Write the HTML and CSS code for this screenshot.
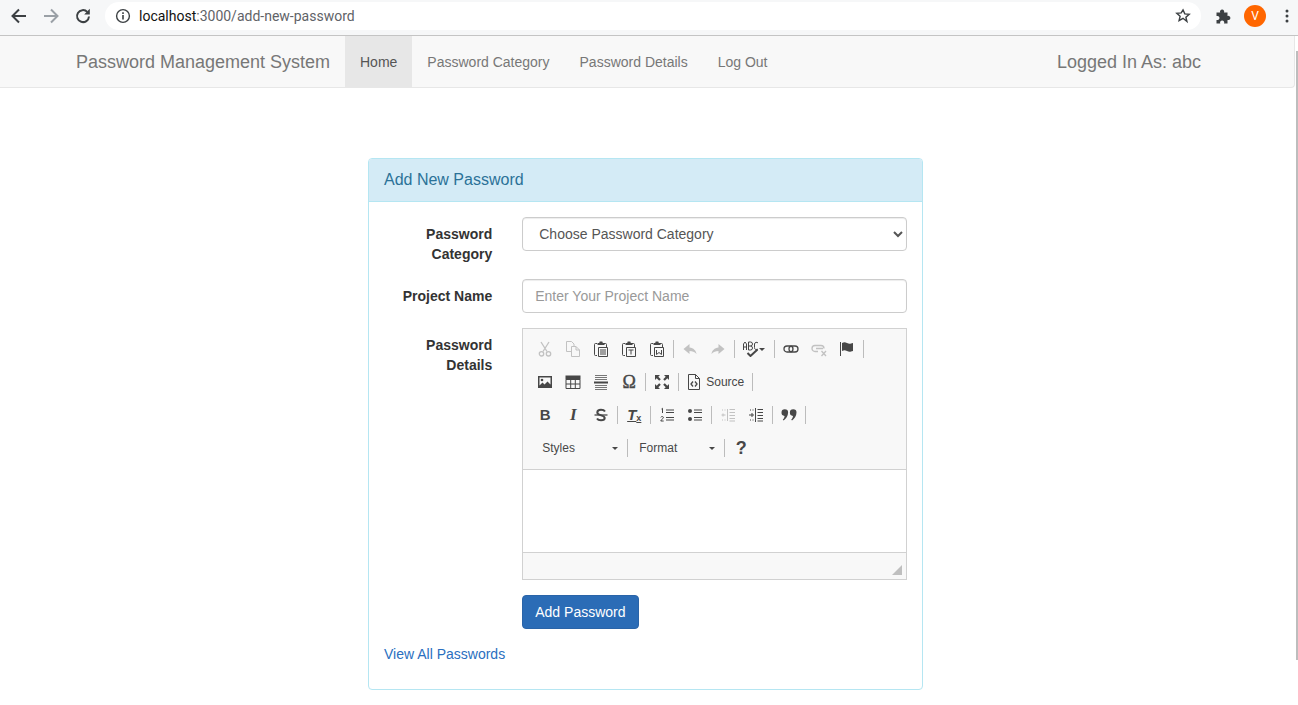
FILE: index.html
```html
<!DOCTYPE html>
<html lang="en">
<head>
<meta charset="utf-8">
<title>Add New Password</title>
<link rel="stylesheet" href="styles.css">
</head>
<body>
<header class="browser">
  <svg class="b-ico" viewBox="0 0 20 20"><path d="M17 10H4M10 3.500 3.500 10l6.500 6.500" class="b-line"/></svg>
  <svg class="b-ico b-dim" viewBox="0 0 20 20"><path d="M3 10h13M10 3.500l6.500 6.500-6.500 6.500" class="b-line"/></svg>
  <svg class="b-ico" viewBox="0 0 20 20"><path d="M16 10.500a6 6 0 1 1-1.700-4.600" class="b-line"/><path d="M16.800 2.800v5.600h-5.600z" class="b-fill"/></svg>
  <div class="omnibox">
    <svg class="info" viewBox="0 0 16 16"><circle cx="8" cy="8" r="6.400" class="i-ring"/><path d="M7.200 7h1.600v4.600H7.200zM7.200 4.300h1.600v1.600H7.200z" class="b-fill"/></svg>
    <span class="url"><span class="url-host">localhost</span>:3000/add-new-password</span>
    <svg class="star" viewBox="0 0 16 16"><path d="m8 1.900 1.800 4 4.400.4-3.300 2.900 1 4.300L8 10.300l-3.900 2.200 1-4.300-3.300-2.900 4.400-.4z" class="i-ring"/></svg>
  </div>
  <svg class="puzzle" viewBox="0 0 16 16"><path d="M.5 4.500h3.700a2.100 2.100 0 1 1 3.800 0h3.500V8a2.100 2.100 0 1 1 0 3.900v3.600H8a2.100 2.100 0 1 0-3.700 0H.5v-3.600a2.100 2.100 0 1 0 0-3.800z" class="b-fill"/></svg>
  <span class="avatar">V</span>
  <svg class="kebab" viewBox="0 0 4 16"><circle cx="2" cy="3" r="1.500" class="b-fill"/><circle cx="2" cy="8" r="1.500" class="b-fill"/><circle cx="2" cy="13" r="1.500" class="b-fill"/></svg>
</header>

<nav class="navbar">
  <a class="brand" href="#">Password Management System</a>
  <ul class="nav-links">
    <li class="active"><a href="#">Home</a></li>
    <li><a href="#">Password Category</a></li>
    <li><a href="#">Password Details</a></li>
    <li><a href="#">Log Out</a></li>
  </ul>
  <span class="logged">Logged In As: abc</span>
</nav>
<div class="scroll-thumb"></div>

<svg class="sprite" aria-hidden="true">
  <symbol id="cut" viewBox="0 0 16 16"><path d="M4 1l6 9.500M12 1 6 10.500" class="s15"/><circle cx="4.500" cy="12.800" r="2.200" class="s15"/><circle cx="11.500" cy="12.800" r="2.200" class="s15"/></symbol>
  <symbol id="copy" viewBox="0 0 16 16"><path d="M1.500 .5h5l2.500 2.500v2.500M6.500 10.500H1.500V.5" class="s1"/><path d="M6.500 5.500h4.500l3.500 3.500v6.500h-8zM11 5.500V9h3.500" class="s1"/></symbol>
  <symbol id="paste" viewBox="0 0 16 16"><path d="M4 2.500H2.500a1 1 0 0 0-1 1v10a1 1 0 0 0 1 1H4M11 2.500h1.500a1 1 0 0 1 1 1V6" class="s1"/><path d="M4.500 4V2h1.700l.5-1.500h2.600L9.800 2h1.700v2z" class="f"/><path d="M5.500 6.500h9v9h-9z" class="s1"/><path d="M7 9h6M7 11h6M7 13h6" class="s1"/></symbol>
  <symbol id="pastet" viewBox="0 0 16 16"><path d="M4 2.500H2.500a1 1 0 0 0-1 1v10a1 1 0 0 0 1 1H4M11 2.500h1.500a1 1 0 0 1 1 1V6" class="s1"/><path d="M4.500 4V2h1.700l.5-1.500h2.600L9.800 2h1.700v2z" class="f"/><path d="M5.500 6.500h9v9h-9z" class="s1"/><path d="M7.500 9h5M10 9v4.500" class="s1"/></symbol>
  <symbol id="pastew" viewBox="0 0 16 16"><path d="M4 2.500H2.500a1 1 0 0 0-1 1v10a1 1 0 0 0 1 1H4M11 2.500h1.500a1 1 0 0 1 1 1V6" class="s1"/><path d="M4.500 4V2h1.700l.5-1.500h2.600L9.800 2h1.700v2z" class="f"/><path d="M5.500 6.500h9v9h-9z" class="s1"/><path d="M7.500 9v4.500l2.500-2 2.500 2V9" class="s1"/></symbol>
  <symbol id="undo" viewBox="0 0 16 16"><path d="M7.500 3 1.500 8l6 5v-3c3 0 5 .8 7 3-.5-3.500-3-6-7-6.500z" class="f"/></symbol>
  <symbol id="redo" viewBox="0 0 16 16"><path d="M8.500 3l6 5-6 5v-3c-3 0-5 .8-7 3 .5-3.500 3-6 7-6.500z" class="f"/></symbol>
  <symbol id="spell" viewBox="0 0 16 16"><path d="M.5 9V3l1.500-2 1.500 2v6M.5 6h3M5.500 9V1h2a2 2 0 0 1 0 4h-2M7.500 5a2 2 0 0 1 0 4h-2M15 2a2 2 0 0 0-3.500 1v3.500A2 2 0 0 0 15 8" class="s1"/><path d="M4.500 12l3 3 7-6.500" class="s2"/></symbol>
  <symbol id="link" viewBox="0 0 16 16"><rect x="1" y="5" width="9" height="6" rx="3" class="s15"/><rect x="6" y="5" width="9" height="6" rx="3" class="s15"/></symbol>
  <symbol id="unlink" viewBox="0 0 16 16"><path d="M7 10.500H4a3 3 0 0 1 0-6h6a3 3 0 0 1 3 3M5 7.500h7" class="s15"/><path d="M10.500 10l4.500 5M15 10l-4.500 5" class="s15"/></symbol>
  <symbol id="flag" viewBox="0 0 16 16"><path d="M1.500 1v14" class="s1"/><path d="M3 2c2-1 3-1 5 0s3 1 6 0v8c-3 1-4 1-6 0s-3-1-5 0z" class="f"/></symbol>
  <symbol id="image" viewBox="0 0 16 16"><path d="M1 2h14v12H1z" class="f"/><path d="M2.500 3.500h11v7l-3-3-3 3-2-2-3 3z" class="w"/><circle cx="5" cy="6" r="1.300" class="f"/></symbol>
  <symbol id="table" viewBox="0 0 16 16"><path d="M.5 1.500h15v4h-15z" class="f"/><path d="M1 5.500h14v9H1zM1 10h14M5.700 5.500v9M10.300 5.500v9" class="s1"/></symbol>
  <symbol id="hr" viewBox="0 0 16 16"><path d="M2 1.500h12M2 3.500h12M2 5.500h12M2 11.500h12M2 13.500h12M2 15.500h12" class="s1 lite"/><path d="M1 8.500h14" class="s2"/></symbol>
  <symbol id="maxi" viewBox="0 0 16 16"><path d="M1 1h5L4.300 2.700 6.800 5.200 5.200 6.800 2.700 4.300 1 6zM15 1v5l-1.700-1.700-2.500 2.500-1.600-1.600 2.500-2.500L10 1zM1 15v-5l1.700 1.700 2.500-2.500 1.600 1.600-2.500 2.500L6 15zM15 15h-5l1.700-1.700-2.500-2.500 1.600-1.600 2.500 2.500L15 10z" class="f"/></symbol>
  <symbol id="source" viewBox="0 0 16 16"><path d="M2.500 .5h7l4 4v11h-11zM9.500 .5v4h4" class="s1"/><path d="M7 7.500 5 10l2 2.500M9 7.500l2 2.500-2 2.500" class="s15"/></symbol>
  <symbol id="strike" viewBox="0 0 16 16"><path d="M12 4.500C11.300 3.300 10 2.800 8 2.800c-2.300 0-3.700 1-3.700 2.700 0 3.500 7.400 2.300 7.400 5.500 0 1.500-1.300 2.300-3.700 2.300-1.900 0-3.300-.6-4-1.800" class="s2"/><path d="M1.500 8h13" class="s15"/></symbol>
  <symbol id="ol" viewBox="0 0 16 16"><path d="M2.500 2l1-.7V6M1.800 10.300c.3-1 2.700-1 2.700.3 0 1-2.700 2-2.700 3.400h2.900" class="s1"/><path d="M7 3h8M7 5.500h8M7 10.500h8M7 13h8" class="s1"/></symbol>
  <symbol id="ul" viewBox="0 0 16 16"><circle cx="3" cy="4" r="2" class="f"/><circle cx="3" cy="12" r="2" class="f"/><path d="M7 3h8M7 5.500h8M7 10.500h8M7 13h8" class="s1"/></symbol>
  <symbol id="outdent" viewBox="0 0 16 16"><path d="M7.500 2v12" class="s1"/><path d="M9.500 2.500H15M9.500 5.500H15M9.500 8.500H15M9.500 11.500H15M9.500 14H15" class="s1"/><path d="M1.500 8h4M3 6.500v3" class="s1"/><path d="M2 3h1M4.500 3h1M2 13h1M4.500 13h1" class="s1"/></symbol>
  <symbol id="indent" viewBox="0 0 16 16"><path d="M7.500 1v14" class="s1"/><path d="M9.500 2.500H15M9.500 5.500H15M9.500 8.500H15M9.500 11.500H15M9.500 14H15" class="s1"/><path d="M1 8h5M4 6v4" class="s1"/><path d="M2 3h1M4.500 3h1M2 13h1M4.500 13h1" class="s1"/></symbol>
  <symbol id="quote" viewBox="0 0 16 16"><path d="M.5 5.500a3.300 3.300 0 0 1 6.600 0c0 3.500-2.200 6.500-4.500 8l-.8-.9c1-1 1.700-2.200 1.800-3.700A3.300 3.300 0 0 1 .5 5.500zM8.900 5.500a3.300 3.300 0 0 1 6.600 0c0 3.500-2.200 6.500-4.500 8l-.8-.9c1-1 1.700-2.200 1.800-3.700a3.300 3.300 0 0 1-3.100-3.400z" class="f"/></symbol>
</svg>

<main class="panel">
  <div class="panel-heading">Add New Password</div>
  <form class="panel-body">
    <div class="form-row">
      <label class="form-label">Password Category</label>
      <div class="form-field">
        <select class="control select"><option>Choose Password Category</option></select>
      </div>
    </div>
    <div class="form-row">
      <label class="form-label">Project Name</label>
      <div class="form-field">
        <input class="control" type="text" placeholder="Enter Your Project Name">
      </div>
    </div>
    <div class="form-row">
      <label class="form-label">Password Details</label>
      <div class="form-field">
        <div class="editor">
          <div class="toolbar">
            <div class="tb-row">
              <span class="tb off"><svg><use href="#cut"/></svg></span>
              <span class="tb off"><svg><use href="#copy"/></svg></span>
              <span class="tb"><svg><use href="#paste"/></svg></span>
              <span class="tb"><svg><use href="#pastet"/></svg></span>
              <span class="tb"><svg><use href="#pastew"/></svg></span>
              <i class="sep"></i>
              <span class="tb off"><svg><use href="#undo"/></svg></span>
              <span class="tb off"><svg><use href="#redo"/></svg></span>
              <i class="sep"></i>
              <span class="tb tb-spell"><svg><use href="#spell"/></svg><b class="caret"></b></span>
              <i class="sep"></i>
              <span class="tb"><svg><use href="#link"/></svg></span>
              <span class="tb off"><svg><use href="#unlink"/></svg></span>
              <span class="tb"><svg><use href="#flag"/></svg></span>
              <i class="sep"></i>
            </div>
            <div class="tb-row">
              <span class="tb"><svg><use href="#image"/></svg></span>
              <span class="tb"><svg><use href="#table"/></svg></span>
              <span class="tb"><svg><use href="#hr"/></svg></span>
              <span class="tb glyph omega">Ω</span>
              <i class="sep"></i>
              <span class="tb"><svg><use href="#maxi"/></svg></span>
              <i class="sep"></i>
              <span class="tb tb-source"><svg><use href="#source"/></svg><span>Source</span></span>
              <i class="sep"></i>
            </div>
            <div class="tb-row">
              <span class="tb glyph bold">B</span>
              <span class="tb glyph italic">I</span>
              <span class="tb"><svg><use href="#strike"/></svg></span>
              <i class="sep"></i>
              <span class="tb glyph clear">T<small>x</small></span>
              <i class="sep"></i>
              <span class="tb"><svg><use href="#ol"/></svg></span>
              <span class="tb"><svg><use href="#ul"/></svg></span>
              <i class="sep"></i>
              <span class="tb off"><svg><use href="#outdent"/></svg></span>
              <span class="tb"><svg><use href="#indent"/></svg></span>
              <i class="sep"></i>
              <span class="tb"><svg><use href="#quote"/></svg></span>
              <i class="sep"></i>
            </div>
            <div class="tb-row">
              <span class="combo combo-styles">Styles<b class="caret"></b></span>
              <i class="sep"></i>
              <span class="combo combo-format">Format<b class="caret"></b></span>
              <i class="sep"></i>
              <span class="tb glyph help">?</span>
            </div>
          </div>
          <div class="editor-body"></div>
          <div class="editor-foot"><span class="grip"></span></div>
        </div>
      </div>
    </div>
    <div class="form-row">
      <div class="form-label"></div>
      <div class="form-field"><button class="btn" type="button">Add Password</button></div>
    </div>
    <p class="view-all"><a href="#">View All Passwords</a></p>
  </form>
</main>
</body>
</html>
```
FILE: styles.css
```css
* { box-sizing: border-box; }
html, body { margin: 0; height: 100%; overflow: hidden; }
body {
  position: relative;
  font: 14px/20px "Liberation Sans", Arial, sans-serif;
  color: #333;
  background: #fff;
}
a { text-decoration: none; }
.sprite { display: none; }

/* browser chrome */
.browser {
  display: flex;
  align-items: center;
  height: 36px;
  padding: 0 0 3px 9px;
  background: #f6f7f8;
  border-bottom: 1px solid #c4c4c4;
}
.b-ico { width: 20px; height: 20px; margin-right: 12px; flex: none; }
.b-line { fill: none; stroke: #3c4043; stroke-width: 2; }
.b-fill { fill: #3c4043; }
.b-dim .b-line { stroke: #9aa0a6; }
.i-ring { fill: none; stroke: #3c4043; stroke-width: 1.400; }
.omnibox {
  display: flex;
  align-items: center;
  width: 1096px;
  height: 28px;
  padding: 0 10px;
  background: #fff;
  border-radius: 14px;
}
.info { width: 16px; height: 16px; margin-right: 8px; }
.url { flex: 1; font: 14px/20px Roboto, sans-serif; color: #5f6368; }
.url-host { color: #111; }
.star { width: 16px; height: 16px; }
.puzzle { width: 16px; height: 16px; margin-left: 15px; }
.avatar {
  width: 22px; height: 22px; margin-left: 12px;
  border-radius: 50%;
  background: #f60;
  color: #fff;
  font: 12px/22px Roboto, sans-serif;
  text-align: center;
}
.kebab { width: 4px; height: 16px; margin-left: 19px; }

/* navbar */
.navbar {
  display: flex;
  align-items: stretch;
  height: 52px;
  width: 1295px;
  padding-left: 76px;
  background: #f8f8f8;
  border: 1px solid #e7e7e7;
  border-width: 0 1px 1px 0;
  border-radius: 0 0 4px 0;
}
.brand { font-size: 18px; line-height: 52px; color: #777; margin-right: 15px; width: 254px; white-space: nowrap; }
.nav-links { display: flex; list-style: none; margin: 0; padding: 0; }
.nav-links a { display: block; height: 51px; padding: 0 15px; line-height: 52px; color: #777; }
.nav-links .active a { background: #e7e7e7; color: #555; }
.logged { margin-left: auto; margin-right: 93px; font-size: 18px; line-height: 52px; color: #777; white-space: nowrap; }
.scroll-thumb {
  position: absolute;
  right: 0; top: 51px;
  width: 2px; height: 609px;
  background: #bdbdbd;
}

/* panel */
.panel {
  width: 555px;
  margin: 70px 0 0 368px;
  background: #fff;
  border: 1px solid #b5e6f2;
  border-radius: 4px;
}
.panel-heading {
  height: 43px;
  padding: 10px 15px;
  font-size: 16px;
  line-height: 21px;
  color: #2b7298;
  background: #d4ebf6;
  border-bottom: 1px solid #b5e6f2;
  border-radius: 3px 3px 0 0;
}
.panel-body { padding: 15px; }
.form-row { display: grid; grid-template-columns: 25% 75%; margin: 0 -15px 15px; }
.form-label { padding: 7px 15px 0; font-weight: 700; text-align: right; }
.form-field { padding: 0 15px; min-width: 0; }
.control {
  display: block;
  width: 100%;
  height: 34px;
  padding: 6px 12px;
  font: inherit;
  color: #555;
  background: #fff;
  border: 1px solid #ccc;
  border-radius: 4px;
  box-shadow: inset 0 1px 1px rgba(0,0,0,.075);
}
.control::placeholder { color: #999; opacity: 1; }
.btn {
  display: block;
  height: 34px;
  padding: 6px 12px;
  font: inherit;
  color: #fff;
  background: #2b6cb6;
  border: 1px solid #2a64a8;
  border-radius: 4px;
}
.view-all { margin: 0 0 10px; }
.view-all a { color: #2a6fc0; }

/* editor */
.editor { border: 1px solid #d1d1d1; height: 252px; display: flex; flex-direction: column; }
.toolbar { height: 141px; padding: 4px 0 0 8px; background: #f8f8f8; border-bottom: 1px solid #d1d1d1; }
.tb-row { display: flex; align-items: center; height: 32px; margin-bottom: 1px; }
.tb { display: flex; align-items: center; justify-content: center; width: 28px; height: 24px; flex: none; color: #474747; }
.tb svg { display: block; width: 16px; height: 16px; flex: none; }
.off { opacity: .3; }
.sep { width: 1px; height: 18px; margin: 0 2px; background: #bcbcbc; flex: none; }
.s1 { fill: none; stroke: #474747; stroke-width: 1; }
.s15 { fill: none; stroke: #474747; stroke-width: 1.300; }
.s2 { fill: none; stroke: #474747; stroke-width: 2; }
.f { fill: #474747; }
.w { fill: #f8f8f8; }
.lite { stroke: #777; }
.tb-spell { width: 35px; justify-content: flex-start; padding-left: 6px; }
.caret {
  display: inline-block;
  width: 0; height: 0;
  border-top: 3px solid #474747;
  border-left: 3px solid transparent;
  border-right: 3px solid transparent;
}
.tb-source { width: 69px; justify-content: flex-start; padding-left: 5px; font-size: 12px; }
.tb-source span { margin-left: 4px; }
.glyph { font-family: "Liberation Sans", Arial, sans-serif; font-size: 16px; font-weight: 700; line-height: 16px; }
.omega { font-family: "Liberation Serif", serif; font-size: 18px; font-weight: 400; -webkit-text-stroke: .4px #474747; }
.bold { font-size: 15px; }
.italic { font-family: "Liberation Serif", serif; font-style: italic; font-size: 17px; }
.clear { font-style: italic; font-size: 15px; text-decoration: underline; }
.clear small { font: 700 9px/9px "Liberation Sans", sans-serif; align-self: flex-end; margin-bottom: 4px; }
.help { font-size: 18px; }
.combo {
  display: flex;
  align-items: center;
  justify-content: space-between;
  height: 24px;
  padding: 0 7px 0 11px;
  font-size: 12px;
  color: #484848;
  flex: none;
}
.combo-styles { width: 94px; }
.combo-format { width: 92px; padding-left: 9px; }
.editor-body { height: 82px; background: #fff; }
.editor-foot {
  flex: 1;
  position: relative;
  background: #f8f8f8;
  border-top: 1px solid #d1d1d1;
}
.grip {
  position: absolute;
  right: 4px; bottom: 4px;
  width: 0; height: 0;
  border-bottom: 10px solid #bfbfbf;
  border-left: 10px solid transparent;
}
```
